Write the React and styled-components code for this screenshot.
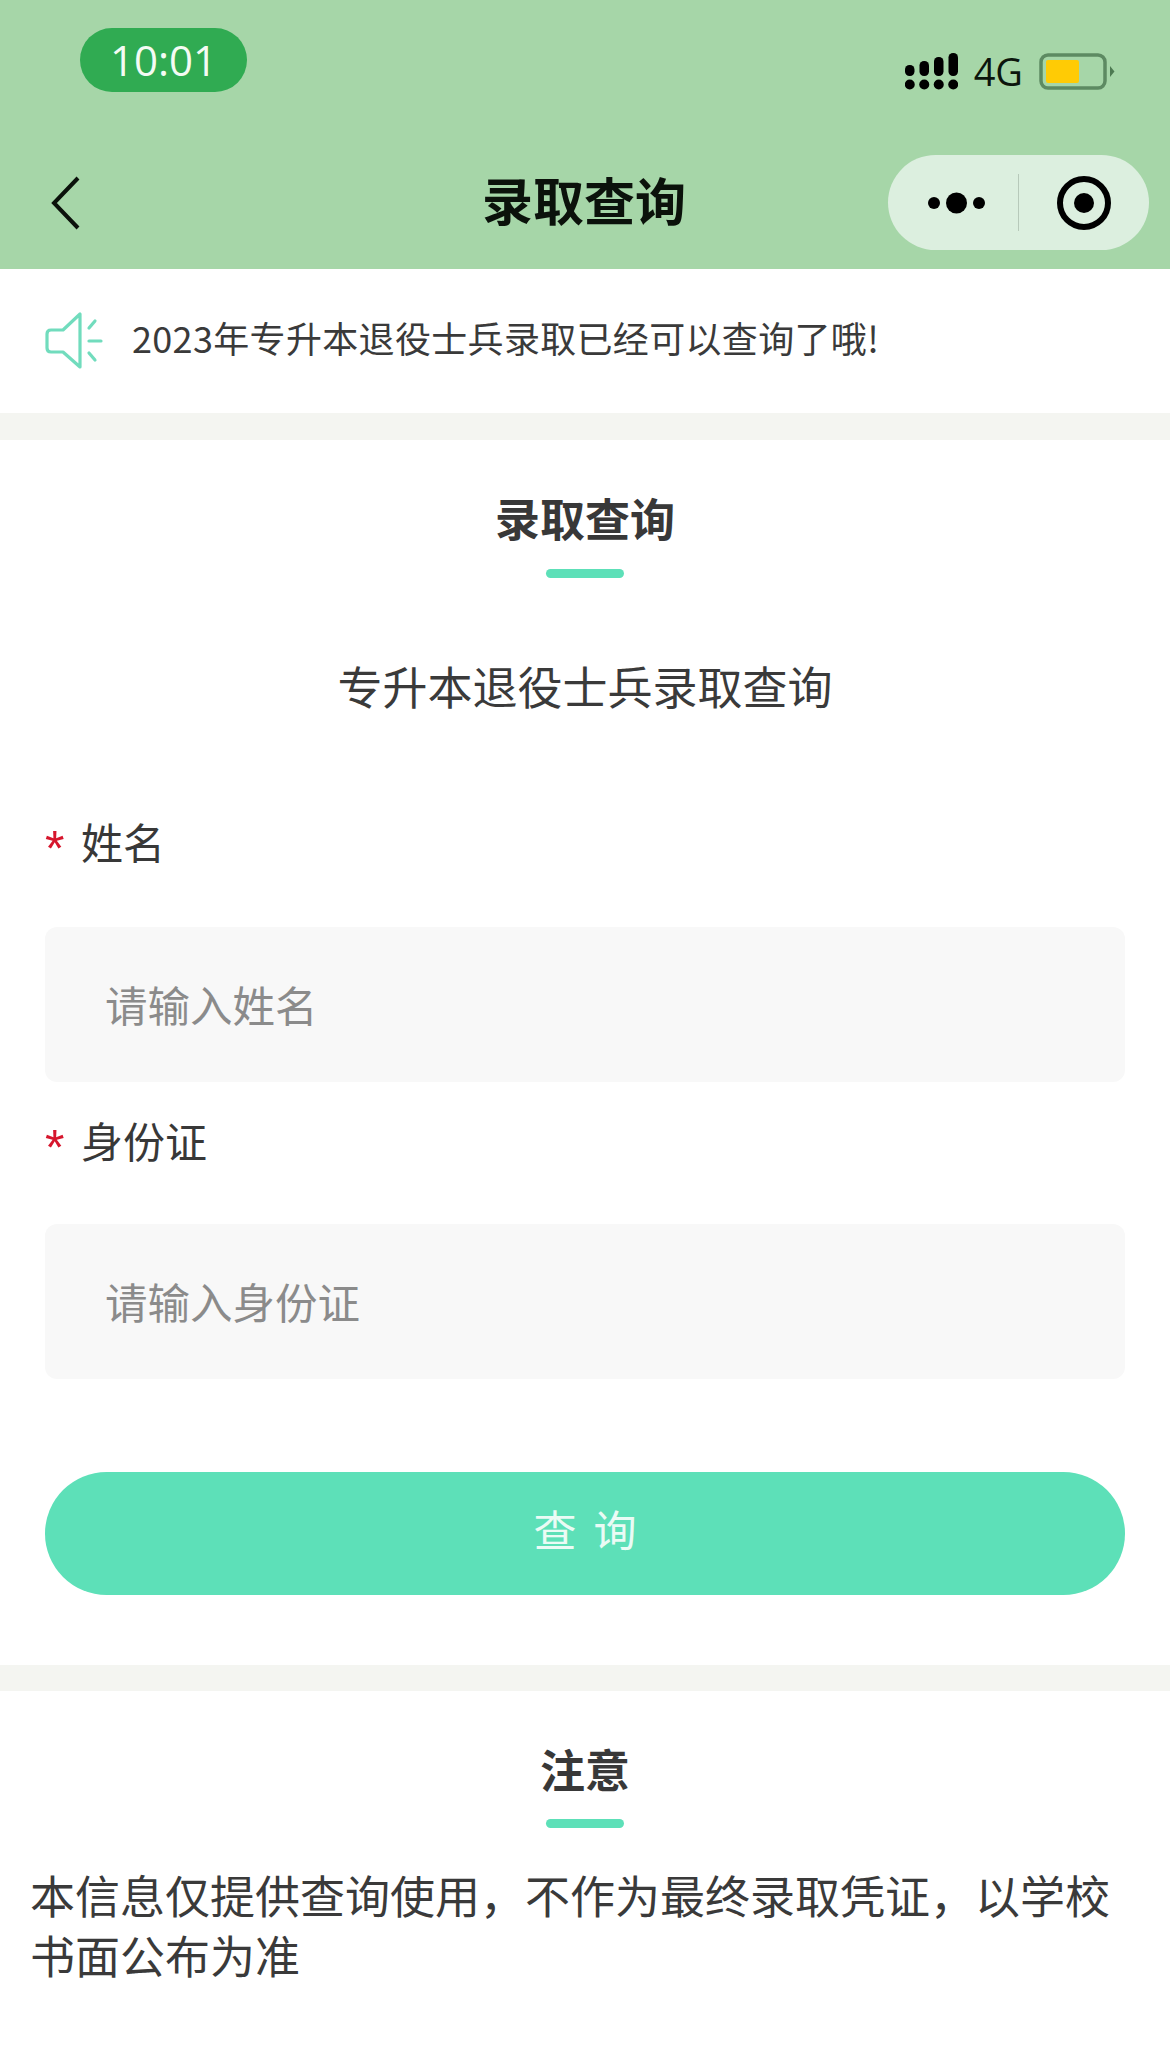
import React from 'react';
import styled, { createGlobalStyle } from 'styled-components';

const Global = createGlobalStyle`
  html, body { margin: 0; padding: 0; background: #fff; }
  body { font-family: "Noto Sans CJK SC", "Noto Sans", sans-serif; color: #333; }
  * { box-sizing: border-box; }
`;

const Page = styled.div`
  width: 1170px;
  height: 2056px;
  overflow: hidden;
  background: #fff;
  display: flex;
  flex-direction: column;
`;

const Header = styled.header`
  height: 269px;
  background: #a6d6a8;
  display: flex;
  flex-direction: column;
`;

const StatusBar = styled.div`
  height: 155px;
  padding: 28px 55px 0 80px;
  display: flex;
  justify-content: space-between;
  align-items: flex-start;
`;

const TimePill = styled.div`
  width: 167px;
  height: 64px;
  border-radius: 32px;
  background: #30ab52;
  color: #f4fbf4;
  font-family: "Open Sans", sans-serif;
  font-size: 42px;
  font-weight: 500;
  line-height: 64px;
  text-align: center;
`;

const StatusIcons = styled.div`
  display: flex;
  align-items: center;
  gap: 16px;
  margin-top: 24px;
`;

const NetLabel = styled.span`
  font-family: "Open Sans", sans-serif;
  font-size: 38px;
  line-height: 38px;
  color: #0c150c;
`;

const NavBar = styled.div`
  position: relative;
  height: 114px;
  padding: 0 21px 19px 51px;
  display: flex;
  align-items: center;
  justify-content: space-between;
`;

const NavTitle = styled.h1`
  position: absolute;
  left: 0;
  right: 2px;
  top: 14px;
  margin: 0;
  text-align: center;
  font-size: 51px;
  line-height: 60px;
  font-weight: 700;
  color: #0b120b;
`;

const Capsule = styled.div`
  width: 261px;
  height: 95px;
  border-radius: 48px;
  background: #dcefdf;
  display: flex;
  align-items: center;
`;

const CapsuleSlot = styled.div`
  flex: 1 1 0;
  height: 100%;
  display: flex;
  align-items: center;
  justify-content: center;

  svg {
    margin-left: ${p => p.$inset || 0}px;
  }
`;

const CapsuleDivider = styled.div`
  width: 1px;
  height: 57px;
  background: #b7c9ba;
`;

const Notice = styled.div`
  height: 144px;
  padding: 0 0 0 45px;
  display: flex;
  align-items: center;
  gap: 29px;
`;

const NoticeText = styled.span`
  font-size: 36px;
  line-height: 46px;
  letter-spacing: 0.33px;
  margin-top: -8px;
  color: #3a3a3a;
`;

const Gap = styled.div`
  height: ${p => p.$h}px;
  margin-top: ${p => p.$top || 0}px;
  background: #f4f5f1;
`;

const Section = styled.section`
  display: flex;
  flex-direction: column;
  align-items: stretch;
`;

const SectionTitle = styled.h2`
  margin: ${p => p.$top}px 0 0;
  text-align: center;
  font-size: 45px;
  line-height: 60px;
  font-weight: 700;
  color: #383838;
`;

const Underline = styled.div`
  align-self: center;
  width: 78px;
  height: 9px;
  margin-top: ${p => p.$top}px;
  border-radius: 5px;
  background: #5de0b8;
`;

const SubTitle = styled.div`
  margin-top: 76px;
  text-align: center;
  font-size: 45px;
  line-height: 64px;
  color: #3a3a3a;
`;

const Form = styled.div`
  padding: 0 45px;
  display: flex;
  flex-direction: column;
`;

const Label = styled.label`
  display: flex;
  align-items: center;
  height: 60px;
  margin-top: ${p => p.$top}px;
  padding-bottom: 6px;
  font-size: 42px;
  color: #383838;
`;

const Star = styled.span`
  width: 36px;
  font-family: "Liberation Sans", sans-serif;
  font-size: 50px;
  line-height: 50px;
  padding-top: 18px;
  color: #d6162d;
`;

const Field = styled.div`
  height: 155px;
  margin-top: ${p => p.$top}px;
  padding: 0 0 3px 60px;
  border-radius: 12px;
  background: #f8f8f8;
  display: flex;
  align-items: center;
  font-size: 42.5px;
  color: #8b8b8b;
`;

const SubmitButton = styled.button`
  height: 123px;
  margin-top: 93px;
  border: 0;
  border-radius: 62px;
  background: #5de0b8;
  color: #eafbf5;
  font-family: inherit;
  font-size: 43px;
  letter-spacing: 17px;
  padding: 0 0 11px 17px;
`;

const NoteText = styled.p`
  margin: 37px 0 0;
  padding: 0 30px;
  font-size: 45px;
  line-height: 60px;
  color: #3a3a3a;
`;

const SignalIcon = () => (
  <svg width="53" height="37" viewBox="0 0 53 37" fill="#000">
    <rect x="0" y="12" width="9.5" height="11" rx="4.5" />
    <rect x="14.500" y="8" width="9.5" height="15" rx="4.5" />
    <rect x="29" y="4" width="9.5" height="19" rx="4.5" />
    <rect x="43.500" y="0" width="9.5" height="23" rx="4.5" />
    <circle cx="4.75" cy="31.5" r="5" />
    <circle cx="19.25" cy="31.5" r="5" />
    <circle cx="33.75" cy="31.5" r="5" />
    <circle cx="48.25" cy="31.5" r="5" />
  </svg>
);

const BatteryIcon = () => (
  <svg width="76" height="37" viewBox="0 0 76 37">
    <rect x="2" y="2" width="64" height="33" rx="7" fill="none" stroke="#5d8a62" strokeWidth="3.5" />
    <rect x="7" y="7" width="33" height="23" rx="2" fill="#ffcb05" />
    <path d="M71 13 L75.500 18.500 L71 24 Z" fill="#4d7a52" />
  </svg>
);

const BackIcon = () => (
  <svg width="29" height="54" viewBox="0 0 29 54" fill="none" stroke="#0b120b" strokeWidth="4">
    <path d="M27 2 L3 27 L27 52" />
  </svg>
);

const MoreIcon = () => (
  <svg width="57" height="22" viewBox="0 0 57 22" fill="#000">
    <circle cx="6" cy="11" r="6" />
    <circle cx="28.500" cy="11" r="10.500" />
    <circle cx="51" cy="11" r="6" />
  </svg>
);

const TargetIcon = () => (
  <svg width="54" height="54" viewBox="0 0 54 54">
    <circle cx="27" cy="27" r="24" fill="none" stroke="#000" strokeWidth="6" />
    <circle cx="27" cy="27" r="10" fill="#000" />
  </svg>
);

const SpeakerIcon = () => (
  <svg width="58" height="58" viewBox="0 0 58 58" fill="none" stroke="#71dcbd" strokeWidth="3.2" strokeLinecap="round" strokeLinejoin="round">
    <path d="M35 2 V55 L18 40 H6 Q2 40 2 36 V22 Q2 18 6 18 H18 Z" />
    <path d="M44 16 L50 9" />
    <path d="M44 29 H56" />
    <path d="M44 41 L50 48" />
  </svg>
);

export default function App() {
  return (
    <Page>
      <Global />
      <Header>
        <StatusBar>
          <TimePill>10:01</TimePill>
          <StatusIcons>
            <SignalIcon />
            <NetLabel>4G</NetLabel>
            <BatteryIcon />
          </StatusIcons>
        </StatusBar>
        <NavBar>
          <BackIcon />
          <NavTitle>录取查询</NavTitle>
          <Capsule>
            <CapsuleSlot $inset={6}><MoreIcon /></CapsuleSlot>
            <CapsuleDivider />
            <CapsuleSlot><TargetIcon /></CapsuleSlot>
          </Capsule>
        </NavBar>
      </Header>
      <Notice>
        <SpeakerIcon />
        <NoticeText>2023年专升本退役士兵录取已经可以查询了哦!</NoticeText>
      </Notice>
      <Gap $h={27} />
      <Section>
        <SectionTitle $top={48}>录取查询</SectionTitle>
        <Underline $top={21} />
        <SubTitle>专升本退役士兵录取查询</SubTitle>
        <Form>
          <Label $top={95}><Star>*</Star>姓名</Label>
          <Field $top={54}>请输入姓名</Field>
          <Label $top={30}><Star>*</Star>身份证</Label>
          <Field $top={52}>请输入身份证</Field>
          <SubmitButton>查询</SubmitButton>
        </Form>
      </Section>
      <Gap $h={26} $top={70} />
      <Section>
        <SectionTitle $top={48}>注意</SectionTitle>
        <Underline $top={20} />
        <NoteText>本信息仅提供查询使用，不作为最终录取凭证，以学校书面公布为准</NoteText>
      </Section>
    </Page>
  );
}
